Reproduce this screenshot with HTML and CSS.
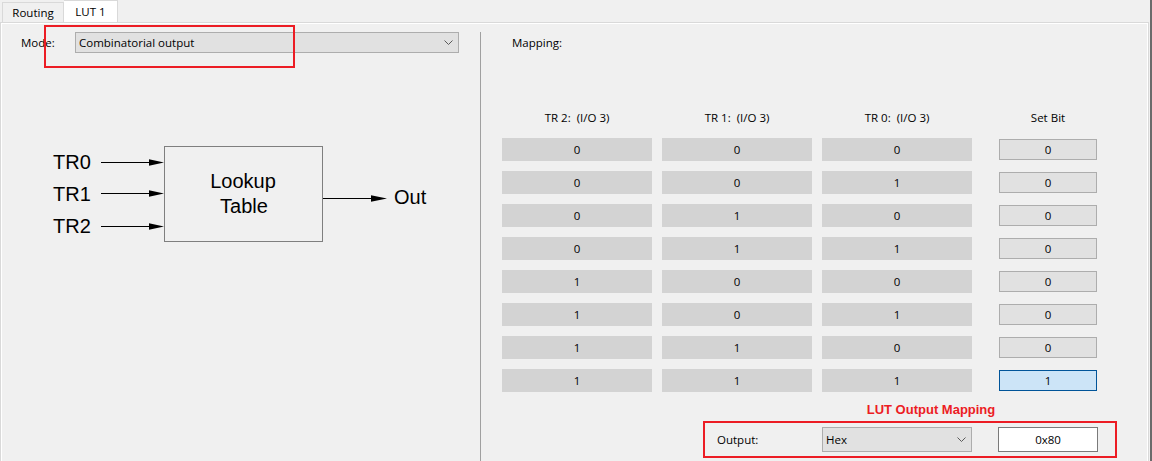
FILE: index.html
```html
<!DOCTYPE html>
<html>
<head>
<meta charset="utf-8">
<link rel="stylesheet" href="styles.css">
</head>
<body>
<div class="window">
  <div class="main">
    <div class="tabs">
      <div class="tab tab-routing">Routing</div>
      <div class="tab tab-active">LUT 1</div>
    </div>
    <div class="panel">
      <div class="left">
        <div class="mode-row">
          <span class="mode-label">Mode:</span>
          <div class="select select-mode">
            <span>Combinatorial output</span>
            <svg class="chev" width="9" height="5" viewBox="0 0 9 5"><polyline points="0.5,0.5 4.5,4.5 8.5,0.5" fill="none" stroke="#5a5a5a" stroke-width="1"/></svg>
          </div>
        </div>
        <svg class="diagram" width="460" height="140" viewBox="1 120 460 140">
          <g font-family="Liberation Sans, Arial, sans-serif" font-size="20" fill="#000">
            <text x="53" y="169">TR0</text>
            <text x="53" y="201">TR1</text>
            <text x="53" y="233">TR2</text>
            <text x="243" y="188" text-anchor="middle">Lookup</text>
            <text x="244" y="212.5" text-anchor="middle">Table</text>
            <text x="394" y="204">Out</text>
          </g>
          <g stroke="#000" stroke-width="1">
            <line x1="101" y1="162.5" x2="151" y2="162.5"/>
            <line x1="101" y1="193.5" x2="151" y2="193.5"/>
            <line x1="101" y1="226.5" x2="151" y2="226.5"/>
            <line x1="323" y1="198.5" x2="373" y2="198.5"/>
          </g>
          <g fill="#000">
            <polygon points="149,159.3 164,162.5 149,165.7"/>
            <polygon points="149,190.3 164,193.5 149,196.7"/>
            <polygon points="149,223.3 164,226.5 149,229.7"/>
            <polygon points="371,195.3 387,198.5 371,201.7"/>
          </g>
          <rect x="164.5" y="146.5" width="158" height="95" fill="none" stroke="#7f7f7f" stroke-width="1"/>
        </svg>
      </div>
      <div class="right">
        <div class="mapping-title">Mapping:</div>
        <div class="grid">
          <div class="head">TR 2:&nbsp; (I/O 3)</div>
          <div class="head">TR 1:&nbsp; (I/O 3)</div>
          <div class="head">TR 0:&nbsp; (I/O 3)</div>
          <div class="head head-bit">Set Bit</div>

          <div class="cell">0</div><div class="cell">0</div><div class="cell">0</div><div class="bit">0</div>
          <div class="cell">0</div><div class="cell">0</div><div class="cell">1</div><div class="bit">0</div>
          <div class="cell">0</div><div class="cell">1</div><div class="cell">0</div><div class="bit">0</div>
          <div class="cell">0</div><div class="cell">1</div><div class="cell">1</div><div class="bit">0</div>
          <div class="cell">1</div><div class="cell">0</div><div class="cell">0</div><div class="bit">0</div>
          <div class="cell">1</div><div class="cell">0</div><div class="cell">1</div><div class="bit">0</div>
          <div class="cell">1</div><div class="cell">1</div><div class="cell">0</div><div class="bit">0</div>
          <div class="cell">1</div><div class="cell">1</div><div class="cell">1</div><div class="bit bit-on">1</div>
        </div>
        <div class="lut-title">LUT Output Mapping</div>
        <div class="output-row">
          <span class="output-label">Output:</span>
          <div class="select select-hex">
            <span>Hex</span>
            <svg class="chev" width="9" height="5" viewBox="0 0 9 5"><polyline points="0.5,0.5 4.5,4.5 8.5,0.5" fill="none" stroke="#5a5a5a" stroke-width="1"/></svg>
          </div>
          <div class="value-box">0x80</div>
        </div>
      </div>
    </div>
  </div>
  <div class="edge"></div>
  <div class="annot annot-mode"></div>
</div>
</body>
</html>
```
FILE: styles.css
```css
body {
  margin: 0;
  background: #f0f0f0;
  font-family: "Open Sans", "Noto Sans", sans-serif;
  font-size: 11.5px;
  color: #000;
}

.window {
  position: relative;
  display: flex;
  width: 1152px;
  height: 461px;
  overflow: hidden;
}

.main {
  width: 1150px;
  display: flex;
  flex-direction: column;
}

.edge {
  width: 2px;
  background: #6b6b6b;
}

.tabs {
  display: flex;
  align-items: flex-end;
  height: 22px;
  padding-left: 2px;
}

.tab {
  box-sizing: border-box;
  height: 20px;
  border: 1px solid #d9d9d9;
  border-bottom: none;
  display: flex;
  align-items: center;
  justify-content: center;
  background: #f0f0f0;
}

.tab-routing {
  width: 62px;
}

.tab-active {
  width: 54px;
  height: 22px;
  background: #fff;
  border-left: none;
}

.panel {
  flex: 1;
  width: 1149px;
  box-sizing: border-box;
  border: 1px solid #d9d9d9;
  border-bottom: none;
  box-shadow: inset 1px 1px 0 #fff, inset -1px 0 0 #fff;
  display: flex;
  padding-top: 9px;
}

.left {
  width: 479px;
}

.mode-row {
  display: flex;
  align-items: center;
  height: 21px;
  padding-left: 20px;
}

.mode-label {
  width: 54px;
}

.select {
  box-sizing: border-box;
  display: flex;
  align-items: center;
  justify-content: space-between;
  background: #e1e1e1;
  border: 1px solid #adadad;
  padding: 0 5px 0 3px;
}

.chev {
  display: block;
}

.select-mode {
  width: 384px;
  height: 21px;
}

.diagram {
  display: block;
  margin-top: 67px;
}

.right {
  flex: 1;
  border-left: 1px solid #a0a0a0;
}

.mapping-title {
  height: 21px;
  line-height: 21px;
  padding-left: 31px;
}

.grid {
  display: grid;
  grid-template-columns: 150px 150px 150px 115px;
  grid-template-rows: 22px repeat(8, 23px);
  column-gap: 10px;
  row-gap: 10px;
  margin: 53px 0 0 21px;
}

.head {
  display: flex;
  align-items: center;
  justify-content: center;
}

.head-bit {
  width: 98px;
  justify-self: end;
}

.cell {
  background: #d3d3d3;
  display: flex;
  align-items: center;
  justify-content: center;
}

.bit {
  box-sizing: border-box;
  width: 98px;
  height: 21px;
  justify-self: end;
  align-self: center;
  border: 1px solid #adadad;
  background: #e1e1e1;
  display: flex;
  align-items: center;
  justify-content: center;
}

.bit-on {
  background: #cce4f7;
  border-color: #005499;
}

.lut-title {
  width: 300px;
  margin: 10px 0 0 300px;
  text-align: center;
  font: bold 13px/16px "Liberation Sans", Arial, sans-serif;
  color: #ec1c24;
}

.output-row {
  box-sizing: border-box;
  display: flex;
  align-items: center;
  width: 414px;
  height: 37px;
  margin: 3px 0 0 222px;
  border: 2px solid #ec1c24;
  padding-left: 12px;
}

.output-label {
  width: 105px;
}

.select-hex {
  width: 150px;
  height: 25px;
}

.value-box {
  box-sizing: border-box;
  width: 100px;
  height: 25px;
  margin-left: 26px;
  background: #fff;
  border: 1px solid #7a7a7a;
  display: flex;
  align-items: center;
  justify-content: center;
}

.annot-mode {
  position: absolute;
  left: 44px;
  top: 25px;
  width: 251px;
  height: 43px;
  box-sizing: border-box;
  border: 2px solid #ec1c24;
}
```
